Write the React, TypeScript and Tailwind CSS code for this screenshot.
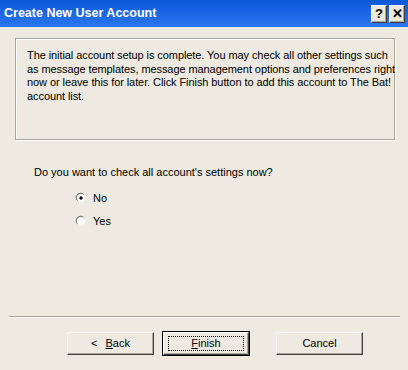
import type { ReactNode } from 'react'

const font = { fontFamily: '"Liberation Sans", Arial, sans-serif' }

function Radio({ checked }: { checked?: boolean }) {
  return (
    <svg width="12" height="12" viewBox="0 0 12 12" className="shrink-0">
      <path d="M1.5 8 A5 5 0 0 1 8 1.5" fill="none" stroke="#ACA899" strokeWidth="1" />
      <path d="M2.6 8.6 A4 4 0 0 1 8.6 2.6" fill="none" stroke="#716F64" strokeWidth="1" />
      <circle cx="6" cy="6" r="3.8" fill="#fff" />
      <path d="M10.5 4 A5 5 0 0 1 4 10.5" fill="none" stroke="#fff" strokeWidth="1" />
      <path d="M9.4 3.4 A4 4 0 0 1 3.4 9.4" fill="none" stroke="#F1EFE2" strokeWidth="1" />
      {checked && <circle cx="6" cy="6" r="1.7" fill="#000" />}
    </svg>
  )
}

function CaptionButton({ children }: { children: ReactNode }) {
  return (
    <div className="w-[16px] h-[18px] flex items-center justify-center bg-[#ECE9D8] border border-t-white border-l-white border-r-[#404040] border-b-[#404040] shadow-[inset_-1px_-1px_0_#ACA899] text-black text-[13px] font-bold leading-none">
      {children}
    </div>
  )
}

function Button({ children, primary }: { children: ReactNode; primary?: boolean }) {
  if (primary) {
    return (
      <div className="w-[88px] h-[25px] border border-black">
        <div className="w-full h-full flex items-center justify-center border border-t-white border-l-white border-r-[#404040] border-b-[#404040] shadow-[inset_-1px_-1px_0_#ACA899]">
          <div className="w-[76px] h-[15px] flex items-center justify-center border border-dotted border-black text-[11px] text-black">
            {children}
          </div>
        </div>
      </div>
    )
  }
  return (
    <div className="w-[87px] h-[23px] flex items-center justify-center border border-t-white border-l-white border-r-[#404040] border-b-[#404040] shadow-[inset_-1px_-1px_0_#ACA899] text-[11px] text-black">
      {children}
    </div>
  )
}

export default function App() {
  return (
    <div className="w-[408px] h-[370px] bg-[#EEEAE1] flex flex-col overflow-hidden" style={font}>
      <div className="h-[27px] flex items-center justify-between bg-gradient-to-b from-[#0A58DA] to-[#2A76EE] pl-[4px] pr-[3px]">
        <span className="text-white font-bold text-[12.5px]">Create New User Account</span>
        <div className="flex gap-[2px]">
          <CaptionButton>?</CaptionButton>
          <CaptionButton>✕</CaptionButton>
        </div>
      </div>

      <div className="mt-[11px] ml-[15px] mr-[13px] h-[102px] border border-[#ACA899] shadow-[inset_1px_1px_0_#fff,1px_1px_0_#fff] pl-[11px] pt-[10px]">
        <p className="text-[11px] leading-[13.5px] tracking-[-0.08px] text-black whitespace-nowrap">
          The initial account setup is complete. You may check all other settings such
          <br />
          as message templates, message management options and preferences right
          <br />
          now or leave this for later. Click Finish button to add this account to The Bat!
          <br />
          account list.
        </p>
      </div>

      <p className="mt-[24px] ml-[34px] text-[11px] text-black">Do you want to check all account's settings now?</p>

      <div className="mt-[11px] ml-[75px] flex flex-col gap-[10px] text-[11px] text-black">
        <label className="flex items-center gap-[6px] h-[13px]">
          <Radio checked />
          <span>No</span>
        </label>
        <label className="flex items-center gap-[6px] h-[13px]">
          <Radio />
          <span>Yes</span>
        </label>
      </div>

      <div className="mt-[88px] ml-[9px] mr-[8px] h-[2px] border-t border-[#ACA899] border-b border-b-white" />

      <div className="mt-[13px] flex items-start">
        <div className="ml-[67px] mt-[1px]">
          <Button>
            <span className="mr-[8px]">&lt;</span>
            <span><u>B</u>ack</span>
          </Button>
        </div>
        <div className="ml-[8px]">
          <Button primary>
            <span><u>F</u>inish</span>
          </Button>
        </div>
        <div className="ml-[26px] mt-[1px]">
          <Button>Cancel</Button>
        </div>
      </div>
    </div>
  )
}
